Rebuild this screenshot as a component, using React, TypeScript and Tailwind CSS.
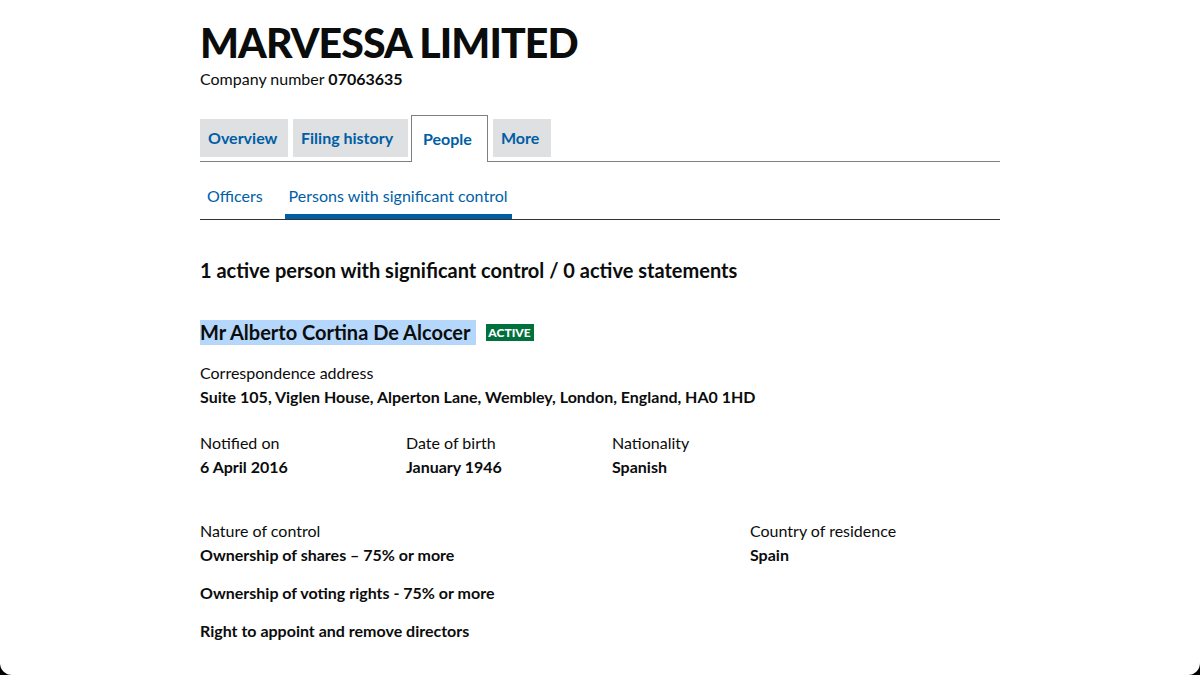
const font = { fontFamily: 'Lato, "Liberation Sans", Arial, sans-serif' }

function Field({ label, value }: { label: string; value: string }) {
  return (
    <div>
      <div className="text-[16px] leading-[25px]">{label}</div>
      <div className="text-[16px] leading-[24px] font-bold">{value}</div>
    </div>
  )
}

export default function App() {
  return (
    <div className="w-[1200px] h-[675px] bg-black" style={font}>
      <div className="h-full bg-white rounded-b-[12px] text-[#0b0c0c]">
        <div className="w-[800px] mx-auto pt-[19px]">
          {/* Company header */}
          <h1 className="text-[41px] leading-[48px] font-black tracking-[-0.9px]">
            MARVESSA LIMITED
          </h1>
          <p className="text-[16px] leading-[24px]">
            Company number <strong>07063635</strong>
          </p>

          {/* Main tabs */}
          <div className="mt-[24px] flex items-end border-b border-[#7f7f7f] h-[47px]">
            <a className="mb-[4px] w-[88px] h-[38px] pl-[8px] flex items-center bg-[#dee0e2] text-[#005ea5] font-bold text-[16px]">
              Overview
            </a>
            <a className="ml-[5px] mb-[4px] w-[115px] h-[38px] pl-[8px] flex items-center bg-[#dee0e2] text-[#005ea5] font-bold text-[16px]">
              Filing history
            </a>
            <a className="ml-[3px] -mb-px w-[77px] h-[47px] pl-[11px] flex items-center bg-white border border-b-0 border-[#7f7f7f] text-[#005ea5] font-bold text-[16px]">
              People
            </a>
            <a className="ml-[5px] mb-[4px] w-[58px] h-[38px] pl-[8px] flex items-center bg-[#dee0e2] text-[#005ea5] font-bold text-[16px]">
              More
            </a>
          </div>

          {/* Sub navigation */}
          <div className="flex gap-[15px] border-b border-[#333]">
            <a className="pt-[22px] pb-[6px] px-[7px] border-b-[5px] border-transparent text-[#005ea5] text-[16px] leading-[24px] whitespace-nowrap">
              Officers
            </a>
            <a className="pt-[22px] pb-[6px] px-[4px] border-b-[5px] border-[#005ea5] text-[#005ea5] text-[16px] leading-[24px] whitespace-nowrap">
              Persons with significant control
            </a>
          </div>

          {/* Summary */}
          <h2 className="mt-[36px] text-[20px] leading-[28px] font-bold">
            1 active person with significant control / 0 active statements
          </h2>

          {/* Person */}
          <div className="mt-[36px] flex items-center">
            <span className="bg-[#b4d7fb] text-[20px] leading-[25px] font-bold pr-[5px]">
              Mr Alberto Cortina De Alcocer
            </span>
            <span className="ml-[10px] h-[17px] w-[48px] justify-center flex items-center bg-[#00703c] text-white text-[12px] font-black uppercase">
              Active
            </span>
          </div>

          <div className="mt-[15px]">
            <Field
              label="Correspondence address"
              value="Suite 105, Viglen House, Alperton Lane, Wembley, London, England, HA0 1HD"
            />
          </div>

          <div className="mt-[21px] grid grid-cols-[206px_206px_1fr]">
            <Field label="Notified on" value="6 April 2016" />
            <Field label="Date of birth" value="January 1946" />
            <Field label="Nationality" value="Spanish" />
          </div>

          <div className="mt-[39px] grid grid-cols-[550px_1fr]">
            <div>
              <div className="text-[16px] leading-[25px]">Nature of control</div>
              <div className="flex flex-col gap-[14px] text-[16px] leading-[24px] font-bold">
                <div>Ownership of shares – 75% or more</div>
                <div>Ownership of voting rights - 75% or more</div>
                <div>Right to appoint and remove directors</div>
              </div>
            </div>
            <Field label="Country of residence" value="Spain" />
          </div>
        </div>
      </div>
    </div>
  )
}
